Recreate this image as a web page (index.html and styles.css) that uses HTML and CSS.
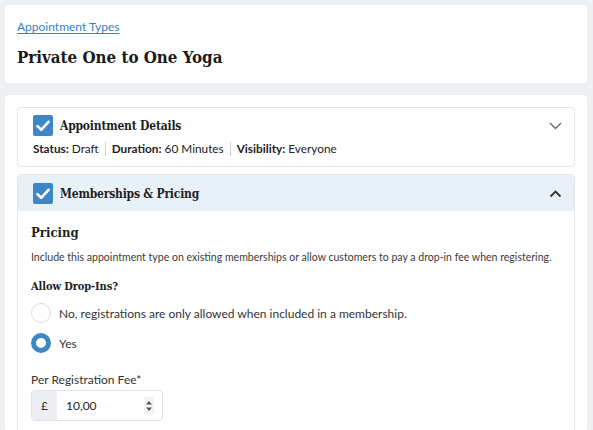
FILE: index.html
```html
<!DOCTYPE html>
<html>
<head>
<meta charset="utf-8">
<link rel="stylesheet" href="styles.css">
</head>
<body>
<div class="card top">
  <div class="crumb-row"><a class="crumb" href="#">Appointment Types</a></div>
  <h1 class="title">Private One to One Yoga</h1>
</div>
<div class="card main">
  <div class="box details">
    <div class="box-head">
      <span class="check"><svg width="14" height="12" viewBox="0 0 14 12"><path d="M1.5 6.2 L5.2 9.8 L12.5 1.8" fill="none" stroke="#fff" stroke-width="2.6" stroke-linecap="round" stroke-linejoin="round"/></svg></span>
      <span class="box-title">Appointment Details</span>
      <svg class="chev" width="13" height="8" viewBox="0 0 13 8"><path d="M1 1 L6.5 6.5 L12 1" fill="none" stroke="#666" stroke-width="1.3"/></svg>
    </div>
    <div class="status">
      <span><b>Status:</b> Draft</span><span class="sep"></span><span><b>Duration:</b> 60 Minutes</span><span class="sep"></span><span><b>Visibility:</b> Everyone</span>
    </div>
  </div>
  <div class="box pricing">
    <div class="box-head open">
      <span class="check"><svg width="14" height="12" viewBox="0 0 14 12"><path d="M1.5 6.2 L5.2 9.8 L12.5 1.8" fill="none" stroke="#fff" stroke-width="2.6" stroke-linecap="round" stroke-linejoin="round"/></svg></span>
      <span class="box-title">Memberships &amp; Pricing</span>
      <svg class="chev" width="13" height="8" viewBox="0 0 13 8"><path d="M1.5 6.5 L6.5 1.5 L11.5 6.5" fill="none" stroke="#333" stroke-width="1.8"/></svg>
    </div>
    <div class="box-body">
      <h2 class="h2">Pricing</h2>
      <p class="desc">Include this appointment type on existing memberships or allow customers to pay a drop-in fee when registering.</p>
      <h3 class="h3">Allow Drop-Ins?</h3>
      <div class="radios">
        <div class="radio"><span class="dot"></span><span>No, registrations are only allowed when included in a membership.</span></div>
        <div class="radio"><span class="dot on"></span><span>Yes</span></div>
      </div>
      <div class="field-label">Per Registration Fee*</div>
      <div class="input">
        <span class="prefix">£</span>
        <span class="value">10,00</span>
        <span class="spin"><svg width="8" height="14" viewBox="0 0 8 14"><path d="M1 5.5 L4 2 L7 5.5Z M1 8.5 L4 12 L7 8.5Z" fill="#555"/></svg></span>
      </div>
    </div>
  </div>
</div>
</body>
</html>
```
FILE: styles.css
```css
html, body { margin: 0; }
body {
  background: #eef1f4;
  padding: 5px 6px 0 5px;
  font-family: "Lato", "Liberation Sans", sans-serif;
  color: #2b2b2b;
}
.card {
  background: #fff;
  border-radius: 4px;
}
.top {
  padding: 14px 12px 14px;
}
.crumb-row {
  height: 16px;
  font-size: 12px;
  line-height: 16px;
}
.crumb {
  color: #3a80c3;
  text-decoration: underline;
  text-underline-offset: 2px;
}
.title {
  margin: 10px 0 0;
  font-family: "DejaVu Serif", serif;
  font-stretch: condensed;
  font-size: 16.8px;
  line-height: 24px;
  font-weight: bold;
  color: #1a1a1a;
}
.main {
  margin-top: 12px;
  padding: 12px 12px 0;
}
.box {
  border: 1px solid #e4e7eb;
  border-radius: 4px;
}
.details {
  padding: 7px 12px 8px 15px;
}
.box-head {
  display: flex;
  align-items: center;
  gap: 7px;
}
.check {
  width: 20px;
  height: 21px;
  border-radius: 2px;
  background: #3d86c8;
  display: flex;
  align-items: center;
  justify-content: center;
}
.box-title {
  font-family: "DejaVu Serif", serif;
  font-stretch: condensed;
  font-weight: bold;
  font-size: 12px;
  letter-spacing: -0.2px;
  color: #1f1f1f;
  flex: 1;
}
.status {
  margin-top: 4px;
  font-size: 11.8px;
  line-height: 18px;
  display: flex;
  align-items: center;
  color: #222;
}
.status b { font-weight: bold; }
.sep {
  width: 1px;
  height: 14px;
  background: #cfd3d8;
  margin: 0 6px;
}
.pricing {
  margin-top: 7px;
  border-bottom: none;
  border-radius: 4px 4px 0 0;
}
.open {
  background: #e8f1f8;
  padding: 8px 12px 7px 15px;
}
.box-body {
  padding: 12px 13px 10px;
}
.h2 {
  margin: 0;
  font-family: "DejaVu Serif", serif;
  font-stretch: condensed;
  font-weight: bold;
  font-size: 13px;
  line-height: 20px;
  color: #1f1f1f;
}
.desc {
  margin: 6px 0 0;
  font-size: 10.55px;
  line-height: 16px;
  color: #3a3a3a;
  white-space: nowrap;
}
.h3 {
  margin: 13px 0 0;
  font-family: "DejaVu Serif", serif;
  font-stretch: condensed;
  font-weight: bold;
  font-size: 11px;
  letter-spacing: -0.1px;
  line-height: 18px;
  color: #1f1f1f;
}
.radios {
  margin-top: 2px;
}
.radio {
  display: flex;
  align-items: center;
  gap: 8px;
  font-size: 12px;
  height: 30px;
  color: #333;
}
.dot {
  width: 20px;
  height: 20px;
  border-radius: 50%;
  border: 1px solid #d9dcdf;
  box-sizing: border-box;
  background: #fff;
}
.dot.on {
  border: 5px solid #3d86c8;
}
.field-label {
  margin-top: 13px;
  font-size: 12px;
  line-height: 18px;
  color: #333;
}
.input {
  margin-top: 1px;
  width: 132px;
  height: 31px;
  box-sizing: border-box;
  border: 1px solid #dfe2e6;
  border-radius: 4px;
  display: flex;
  align-items: center;
  overflow: hidden;
}
.prefix {
  width: 25px;
  height: 100%;
  background: #eceef1;
  display: flex;
  align-items: center;
  justify-content: center;
  font-size: 12px;
  color: #333;
}
.value {
  flex: 1;
  padding-left: 9px;
  font-size: 12px;
  color: #222;
}
.spin {
  width: 10px;
  height: 17px;
  background: #f1f2f4;
  margin-right: 8px;
  display: flex;
  align-items: center;
  justify-content: center;
}
```
